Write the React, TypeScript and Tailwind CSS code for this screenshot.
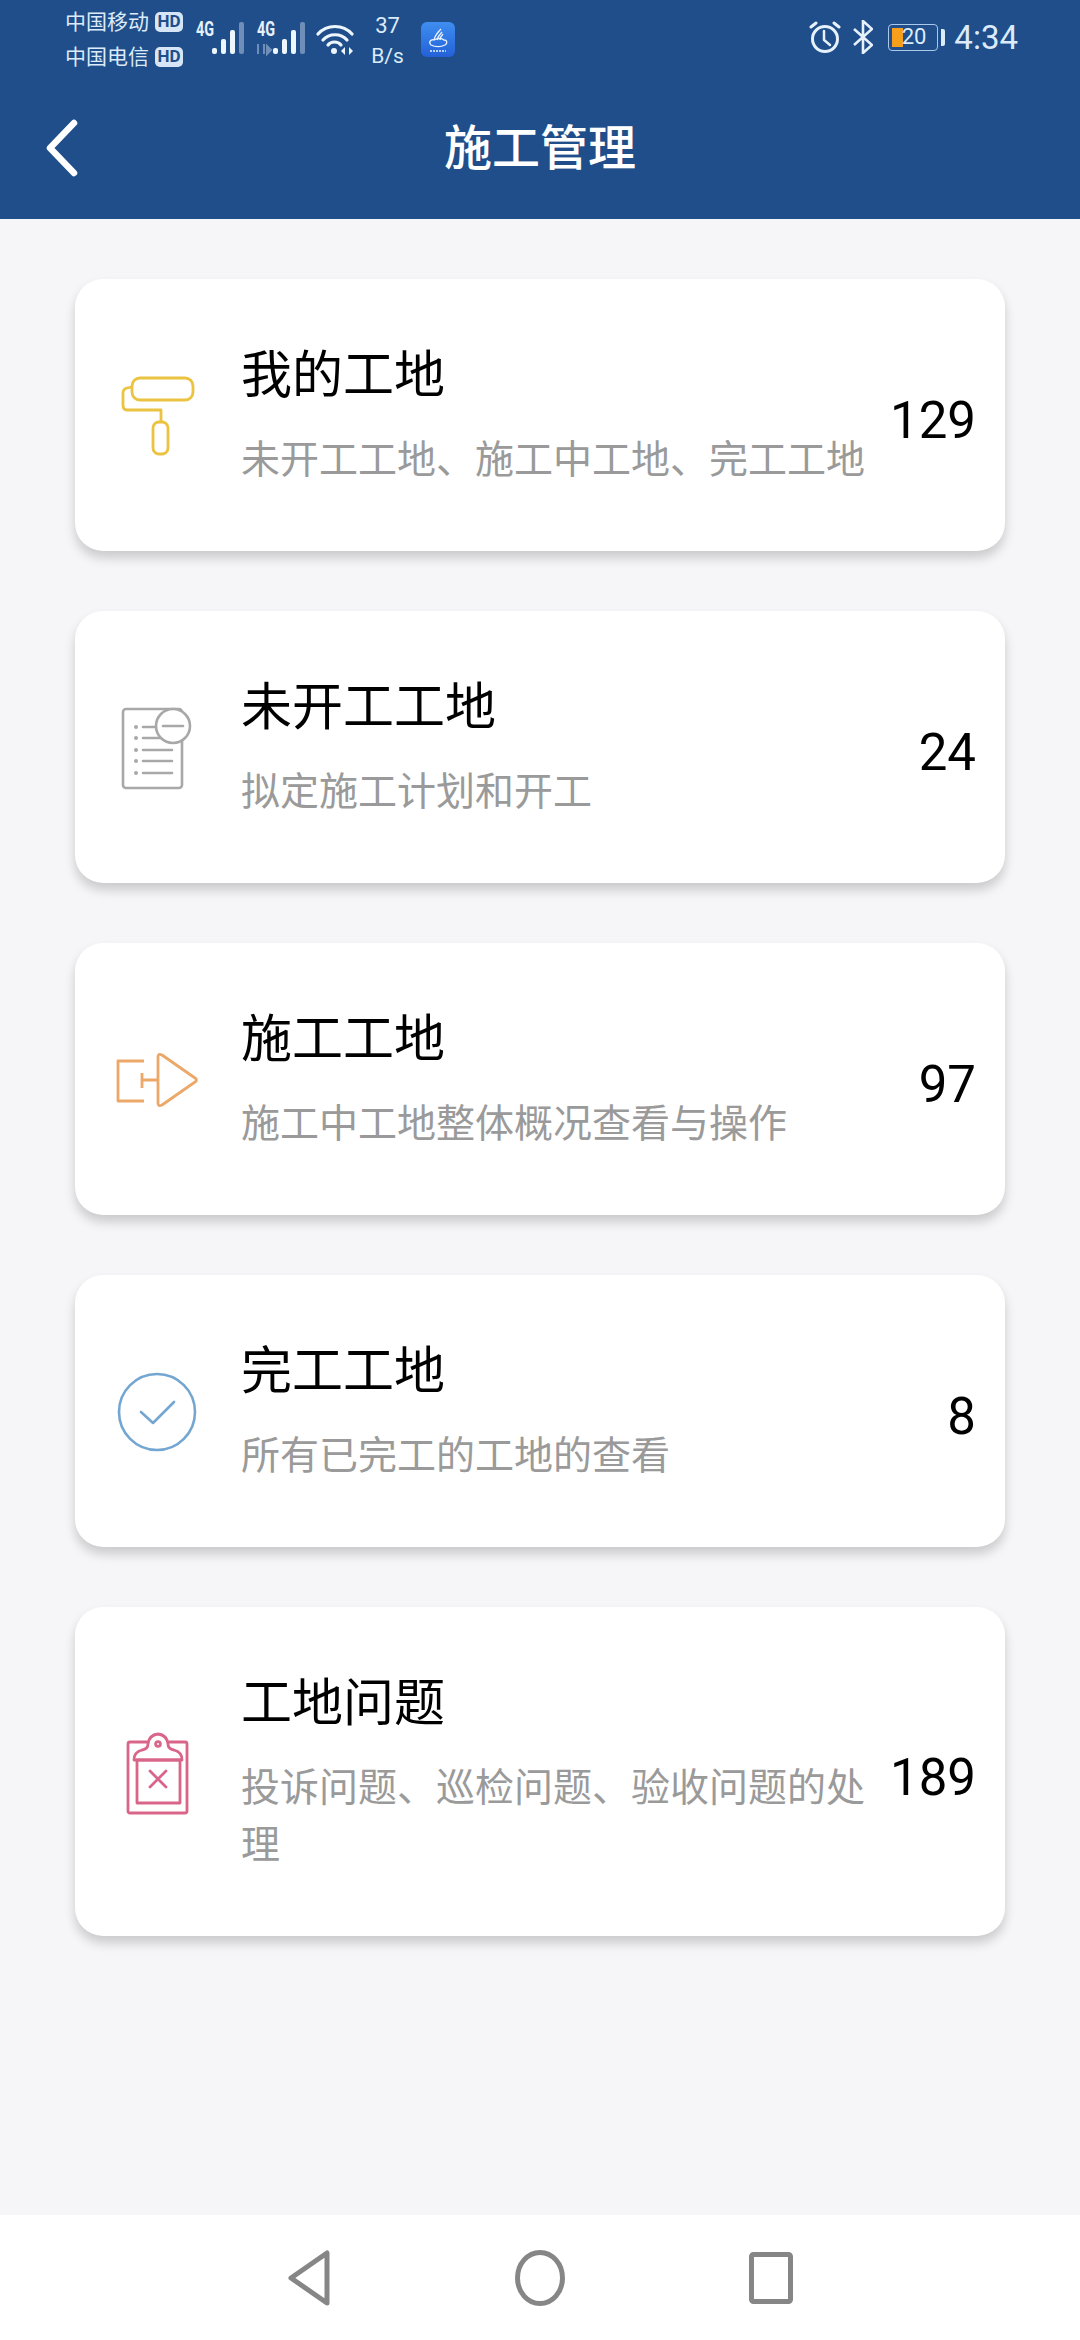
const FONT = 'font-["Roboto","Noto_Sans_CJK_SC",sans-serif]';

function HdBadge() {
  return (
    <span className="ml-[6px] flex h-[20px] w-[28px] items-center justify-center rounded-[5px] bg-[#d6e6f6] text-[17px] font-bold leading-none text-[#1f4e89]">
      HD
    </span>
  );
}

function Signal({ arrows }: { arrows?: boolean }) {
  return (
    <div className="relative flex h-[34px] w-[49px] shrink-0">
      <span className="mt-[-3px] h-[20px] origin-left scale-x-[0.72] text-[20px] font-bold leading-[20px] text-[#e6f1fb]">4G</span>
      <svg width="34" height="34" viewBox="0 0 34 34" className="absolute right-0 top-0 overflow-visible">
        {arrows && <path d="M-14 22v10M-8 22v10M-5 24l4 4-4 4z" stroke="#6f8fb8" strokeWidth="2" fill="#6f8fb8" />}
        <rect x="1" y="26" width="5" height="6" rx="2" fill="#eef6fd" />
        <rect x="10" y="17" width="5" height="15" rx="2" fill="#eef6fd" />
        <rect x="19" y="8" width="5" height="24" rx="2" fill="#eef6fd" />
        <rect x="28" y="0" width="5" height="32" rx="2" fill="#6f8fb8" />
      </svg>
    </div>
  );
}

function StatusBar() {
  return (
    <div className="flex h-[74px] items-center pl-[65px] pr-[62px] text-[#dcebf9]">
      <div className="flex w-[122px] flex-col gap-[13px] pt-[4px]">
        <div className="flex h-[22px] items-center text-[21px] leading-[22px]">中国移动<HdBadge /></div>
        <div className="flex h-[22px] items-center text-[21px] leading-[22px]">中国电信<HdBadge /></div>
      </div>
      <div className="ml-[9px] flex gap-[12px] pt-[4px]">
        <Signal />
        <Signal arrows />
      </div>
      <svg width="38" height="32" viewBox="0 0 38 32" className="ml-[10px] mt-[3px]" fill="none" stroke="#eef6fd" strokeWidth="3.2" strokeLinecap="round">
        <path d="M2 11C11 1 27 1 36 11" />
        <path d="M7 17C13 10 25 10 31 17" />
        <path d="M12 22C15 18 22 18 25 22" />
        <circle cx="18" cy="28" r="3" fill="#eef6fd" stroke="none" />
        <path d="M29 24l-4 4 4 4zM33 24l4 4-4 4z" fill="#eef6fd" stroke="none" />
      </svg>
      <div className="ml-[17px] mt-[8px] flex w-[33px] flex-col items-center text-[22px] leading-[31px]">
        <span>37</span>
        <span className="text-[21px]">B/s</span>
      </div>
      <div className="ml-[17px] mt-[5px] flex h-[35px] w-[34px] items-center justify-center rounded-[6px] bg-gradient-to-b from-[#3f8ef0] to-[#2460d8]">
        <svg width="24" height="26" viewBox="0 0 24 26" fill="none" stroke="#e8f2ff" strokeWidth="1.3">
          <path d="M8 13C9 8 12 5 15 2M11 13c1-4 3-6 5-8M14 13c0-3 2-5 3-6" />
          <path d="M5 18c-3-3 0-6 3-5 3-2 8-2 10 0 3 0 4 3 1 5-4 2-10 2-14 0z" />
          <path d="M4 24h16" strokeDasharray="2 1" />
        </svg>
      </div>
      <div className="ml-auto flex items-center">
        <svg width="32" height="34" viewBox="0 0 32 34" fill="none" stroke="#e6f1fb" strokeWidth="3" strokeLinecap="round">
          <circle cx="16" cy="19" r="12.5" />
          <path d="M15 11v9l6 5" strokeWidth="2.5" />
          <path d="M2 7l5-4M30 7l-5-4" />
        </svg>
        <svg width="20" height="34" viewBox="0 0 20 34" className="ml-[12px]" fill="none" stroke="#e6f1fb" strokeWidth="2.6">
          <path d="M1 9l18 16-9 8V1l9 8L1 25" />
        </svg>
        <div className="relative ml-[15px] flex h-[27px] w-[50px] items-center justify-end rounded-[4px] border border-[#a9c8ea] pr-[11px] text-[22px] leading-none">
          <span className="absolute left-[3px] top-[3px] h-[19px] w-[11px] bg-[#f59f1b]" />
          <span className="relative">20</span>
        </div>
        <span className="ml-[3px] h-[17px] w-[4px] rounded-r-[2px] bg-[#dcebf9]" />
        <span className="ml-[9px] text-[33px] leading-none">4:34</span>
      </div>
    </div>
  );
}

function RollerIcon() {
  return (
    <svg width="88" height="88" viewBox="0 0 88 88" fill="none" stroke="#ecc341" strokeWidth="2.8" strokeLinejoin="round">
      <rect x="17" y="6" width="61" height="22" rx="8" />
      <path d="M17 15l-5 1q-4 1-4 5v12q0 5 4 5h34v12" />
      <rect x="38" y="50" width="15" height="32" rx="6" />
    </svg>
  );
}

function DocIcon() {
  return (
    <svg width="88" height="88" viewBox="0 0 88 88" fill="none" stroke="#a8a8a8" strokeWidth="2.6" strokeLinecap="round">
      <rect x="8" y="5" width="59" height="79" rx="3" />
      <path d="M28 23h29M28 34h29M28 46h29M28 57h29M28 69h29" />
      <g fill="#a8a8a8" stroke="none">
        <circle cx="21" cy="23" r="2" />
        <circle cx="21" cy="34" r="2" />
        <circle cx="21" cy="46" r="2" />
        <circle cx="21" cy="57" r="2" />
        <circle cx="21" cy="69" r="2" />
      </g>
      <circle cx="58" cy="22" r="17" fill="#ffffff" />
      <path d="M48 22h20" />
    </svg>
  );
}

function ArrowIcon() {
  return (
    <svg width="88" height="88" viewBox="0 0 88 88" fill="none" stroke="#eba868" strokeWidth="2.8" strokeLinejoin="round">
      <path d="M29 25H3v40h26" />
      <path d="M27 37v15M27 44h16" />
      <path d="M43 21q0-4 4-2l33 23q3 2 0 4L47 69q-4 2-4-2z" />
    </svg>
  );
}

function CheckIcon() {
  return (
    <svg width="88" height="88" viewBox="0 0 88 88" fill="none" stroke="#74a6d2" strokeWidth="2.6" strokeLinecap="round" strokeLinejoin="round">
      <circle cx="42" cy="44" r="38" />
      <path d="M26 44l12 11 21-21" />
    </svg>
  );
}

function ClipboardIcon() {
  return (
    <svg width="88" height="88" viewBox="0 0 88 88" fill="none" stroke="#d9668a" strokeWidth="2.8" strokeLinejoin="round" strokeLinecap="round">
      <path d="M32 14H15q-2 0-2 2v67q0 2 2 2h55q2 0 2-2V16q0-2-2-2H54" />
      <path d="M19 32q0-8 8-10 6-1 6-6 1-9 10-10 9 1 10 10 0 5 6 6 8 2 8 10z" />
      <rect x="22" y="32" width="43" height="43" />
      <path d="M35 43l16 16M51 43L35 59" />
      <circle cx="43" cy="16" r="2.4" />
    </svg>
  );
}

const rows = [
  { title: '我的工地', desc: '未开工工地、施工中工地、完工工地', count: '129', icon: <RollerIcon /> },
  { title: '未开工工地', desc: '拟定施工计划和开工', count: '24', icon: <DocIcon /> },
  { title: '施工工地', desc: '施工中工地整体概况查看与操作', count: '97', icon: <ArrowIcon /> },
  { title: '完工工地', desc: '所有已完工的工地的查看', count: '8', icon: <CheckIcon /> },
  { title: '工地问题', desc: '投诉问题、巡检问题、验收问题的处理', count: '189', icon: <ClipboardIcon /> },
];

export default function App() {
  return (
    <div className={`flex h-[2340px] w-[1080px] flex-col overflow-hidden bg-[#f6f6f8] ${FONT}`}>
      <header className="h-[219px] shrink-0 bg-[#1f4e8a]">
        <StatusBar />
        <div className="relative flex h-[145px] items-center justify-center pt-[5px]">
          <svg width="34" height="58" viewBox="0 0 34 58" className="absolute left-[45px] top-[45px]" fill="none" stroke="#ffffff" strokeWidth="6.5" strokeLinecap="round" strokeLinejoin="round">
            <path d="M29 4L5 29l24 25" />
          </svg>
          <h1 className="text-[48px] font-medium leading-none text-white">施工管理</h1>
        </div>
      </header>

      <main className="flex flex-1 flex-col gap-[60px] px-[75px] pt-[60px]">
        {rows.map(row => (
          <div key={row.title} className="flex items-center rounded-[28px] bg-white pb-[62px] pl-[40px] pr-[29px] pt-[63px] shadow-[0_7px_11px_rgba(0,0,0,0.18)]">
            <div className="shrink-0">{row.icon}</div>
            <div className="ml-[38px] w-[640px]">
              <div className="text-[51px] leading-[68px] text-black">{row.title}</div>
              <div className="mt-[22px] text-[39px] leading-[57px] text-[#9a9a9a]">{row.desc}</div>
            </div>
            <div className="ml-auto mt-[10px] text-[51px] leading-none text-black">{row.count}</div>
          </div>
        ))}
      </main>

      <nav className="flex h-[125px] shrink-0 items-center justify-center gap-[184px] bg-white">
        <svg width="44" height="58" viewBox="0 0 44 58" fill="none" stroke="#868686" strokeWidth="5" strokeLinejoin="round">
          <path d="M40 4v50L4 29z" />
        </svg>
        <svg width="50" height="56" viewBox="0 0 50 56" fill="none" stroke="#868686" strokeWidth="5">
          <ellipse cx="25" cy="28" rx="22.5" ry="25.5" />
        </svg>
        <svg width="44" height="52" viewBox="0 0 44 52" fill="none" stroke="#868686" strokeWidth="5" strokeLinejoin="round">
          <rect x="2.5" y="2.5" width="39" height="47" rx="2" />
        </svg>
      </nav>
    </div>
  );
}
